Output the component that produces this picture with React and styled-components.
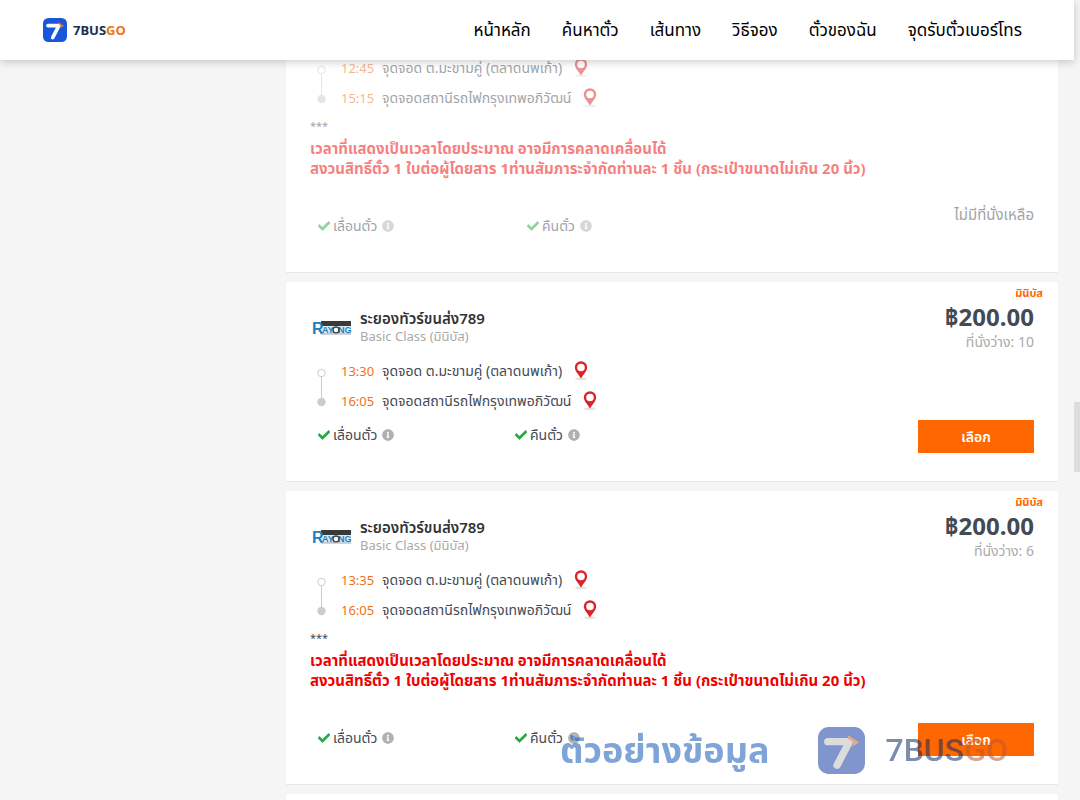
import React from 'react';
import styled, { createGlobalStyle } from 'styled-components';
import { FaCheck, FaInfoCircle } from 'react-icons/fa';

const GlobalStyle = createGlobalStyle`
  * {
    box-sizing: border-box;
  }

  body {
    background: #f5f5f5;
    color: #434a54;
    font-family: 'Noto Sans', 'Noto Sans Thai', Tahoma, sans-serif;
    font-size: 14px;
    line-height: 20px;
    margin: 0;
  }
`;

const Page = styled.div`
  height: 100vh;
  overflow: hidden;
  padding-right: 6px;
`;

const Header = styled.header`
  align-items: center;
  background: #fff;
  box-shadow: 0 2px 8px rgba(0, 0, 0, 0.2);
  display: flex;
  height: 60px;
  justify-content: space-between;
  padding: 0 52px 0 43px;
  position: relative;
  z-index: 2;
`;

const Brand = styled.a`
  align-items: center;
  color: #1b2d4f;
  display: flex;
  font-size: 13px;
  font-weight: bold;
  gap: 6px;
  text-decoration: none;
`;

const BrandAccent = styled.span`
  color: #ec7623;
`;

const Nav = styled.nav`
  display: flex;
  gap: 31px;
`;

const NavLink = styled.a`
  color: #000;
  font-size: 17px;
  line-height: 24px;
  text-decoration: none;
  white-space: nowrap;
`;

/* The list is scrolled: the first trip starts above the header. */
const Results = styled.main`
  display: flex;
  flex-direction: column;
  gap: 9px;
  margin: -81px 16px 0 286px;
`;

const Card = styled.article`
  background: #fff;
  border-bottom: 1px solid #e4e6e8;
  display: flex;
  flex-shrink: 0;
  justify-content: space-between;
  position: relative;
`;

const Details = styled.div`
  flex: 1;
  opacity: ${({ $faded }) => ($faded ? 0.5 : 1)};
  padding: 27px 0 36px 24px;
`;

const Aside = styled.div`
  align-items: flex-end;
  display: flex;
  flex-direction: column;
  justify-content: space-between;
  opacity: ${({ $faded }) => ($faded ? 0.5 : 1)};
  padding: 18px 24px 28px 0;
`;

const Operator = styled.div`
  align-items: center;
  display: flex;
  gap: 8px;
  height: 36px;
`;

const OperatorName = styled.h2`
  color: #333;
  font-size: 15px;
  font-weight: 600;
  line-height: 18px;
  margin: 0;
`;

const BusClass = styled.div`
  color: #aaa;
  font-size: 13px;
  line-height: 18px;
`;

const Route = styled.div`
  display: flex;
  margin-top: 11px;
`;

const Stops = styled.ul`
  list-style: none;
  margin: 0;
  padding: 0;
`;

const Stop = styled.li`
  align-items: center;
  display: flex;
  height: 30px;
`;

const Time = styled.time`
  color: #f0721a;
  font-size: 13px;
  width: 41px;
`;

const PinButton = styled.button`
  background: none;
  border: 0;
  cursor: pointer;
  display: flex;
  margin-left: 12px;
  padding: 0;
`;

const Notice = styled.div`
  margin: 3px 0 38px;
`;

const Stars = styled.div`
  font-size: 11px;
`;

const Warning = styled.p`
  color: #f00000;
  font-size: 15px;
  font-weight: bold;
  margin: 2px 0 0;
  white-space: nowrap;
`;

const Features = styled.ul`
  display: flex;
  list-style: none;
  margin: 9px 0 0;
  padding: 0 0 0 8px;
`;

const Feature = styled.li`
  align-items: center;
  display: flex;
  gap: 3px;
  width: ${({ $wide }) => ($wide ? '209px' : '197px')};

  svg:first-child {
    color: #28a745;
    stroke: #28a745;
    stroke-width: 20;
  }

  svg:last-child {
    color: #b0b0b0;
    margin-left: 2px;
  }
`;

const Badge = styled.span`
  color: #ff6700;
  font-size: 11px;
  font-weight: bold;
  line-height: 12px;
  position: absolute;
  right: 15px;
  top: 5px;
`;

const Price = styled.div`
  font-size: 24px;
  font-weight: bold;
  line-height: 33px;
  text-align: right;
`;

const Seats = styled.div`
  color: #aaa;
  line-height: 18px;
  text-align: right;
`;

const SelectButton = styled.button`
  background: #ff6700;
  border: 0;
  color: #fff;
  cursor: pointer;
  font: inherit;
  font-weight: 600;
  height: 33px;
  width: 116px;
`;

const SoldOut = styled.div`
  font-size: 15px;
  margin: auto 0 20px;
`;

const ScrollThumb = styled.div`
  background: #ddd;
  height: 70px;
  position: fixed;
  right: 0;
  top: 402px;
  width: 6px;
`;

const Watermark = styled.div`
  align-items: center;
  bottom: 22px;
  color: #0f2f68;
  display: flex;
  font-family: Roboto, sans-serif;
  font-size: 32px;
  font-weight: 500;
  line-height: 56px;
  opacity: 0.55;
  pointer-events: none;
  position: fixed;
  right: 72px;
  z-index: 3;
`;

const WatermarkText = styled.span`
  color: #1459b8;
  font-family: 'Noto Sans', 'Noto Sans Thai', sans-serif;
  font-size: 36px;
  font-weight: bold;
  margin-right: 49px;
`;

const WatermarkName = styled.span`
  margin-left: 20px;

  ${BrandAccent} {
    color: #c0582a;
  }
`;

function LogoMark({ size, fill = '#1a56db', digit = '#fff', arrow = '#f0721a' }) {
  return (
    <svg width={size} height={size} viewBox="0 0 48 48" aria-hidden="true">
      <rect width="48" height="48" rx="11" fill={fill} />
      <path
        d="M10 15h22L19.500 39"
        fill="none"
        stroke={digit}
        strokeWidth="7.500"
        strokeLinecap="round"
        strokeLinejoin="round"
      />
      <path d="M30 8l12 7.500-7 5c1.500-4 .5-7-4-8z" fill={arrow} />
    </svg>
  );
}

function RayongLogo() {
  return (
    <svg width="42" height="38" viewBox="0 0 42 38" role="img" aria-label="Rayong">
      <rect x="11" y="13" width="30" height="5" fill="#3a3a3a" />
      <rect x="11" y="18" width="30" height="8" fill="#dcebf3" />
      <g fontFamily="Liberation Sans, sans-serif" fontWeight="bold" fill="#1a80c2">
        <text x="2" y="26" fontSize="16">R</text>
        <text x="12" y="25" fontSize="9">AY</text>
        <text x="28" y="25" fontSize="9">NG</text>
      </g>
      <circle cx="26" cy="22" r="3" fill="#fff" stroke="#444" strokeWidth="1.500" />
      <path d="M11 26h30" stroke="#aaa" strokeWidth="1" />
    </svg>
  );
}

function RouteLine() {
  return (
    <svg width="31" height="60" viewBox="0 0 31 60" aria-hidden="true">
      <path d="M11.500 20v22" stroke="#ccc" strokeWidth="1" />
      <circle cx="11.500" cy="17" r="3.700" fill="#fff" stroke="#ccc" />
      <circle cx="11.500" cy="46" r="4.200" fill="#ccc" />
    </svg>
  );
}

function Pin() {
  return (
    <svg width="14" height="20" viewBox="0 0 14 20" aria-hidden="true">
      <ellipse cx="7" cy="17.700" rx="6" ry="1.500" fill="#e4e4e4" />
      <path
        fillRule="evenodd"
        fill="#d9252b"
        d="M7 .2a6.200 6.200 0 0 0-6.200 6.200c0 3.600 3.700 6.600 6.200 11.100 2.500-4.500 6.200-7.500 6.200-11.100A6.200 6.200 0 0 0 7 .2zm0 2.500a3.800 3.800 0 1 1 0 7.600 3.800 3.800 0 0 1 0-7.600z"
      />
    </svg>
  );
}

const links = ['หน้าหลัก', 'ค้นหาตั๋ว', 'เส้นทาง', 'วิธีจอง', 'ตั๋วของฉัน', 'จุดรับตั๋วเบอร์โทร'];

const trips = [
  { depart: '12:45', arrive: '15:15', seats: 0, notice: true },
  { depart: '13:30', arrive: '16:05', seats: 10, notice: false },
  { depart: '13:35', arrive: '16:05', seats: 6, notice: true },
];

function Trip({ depart, arrive, seats, notice }) {
  const soldOut = seats === 0;

  return (
    <Card>
      <Details $faded={soldOut}>
        <Operator>
          <RayongLogo />
          <div>
            <OperatorName>ระยองทัวร์ขนส่ง789</OperatorName>
            <BusClass>Basic Class (มินิบัส)</BusClass>
          </div>
        </Operator>
        <Route>
          <RouteLine />
          <Stops>
            <Stop>
              <Time>{depart}</Time>
              จุดจอด ต.มะขามคู่ (ตลาดนพเก้า)
              <PinButton aria-label="แผนที่">
                <Pin />
              </PinButton>
            </Stop>
            <Stop>
              <Time>{arrive}</Time>
              จุดจอดสถานีรถไฟกรุงเทพอภิวัฒน์
              <PinButton aria-label="แผนที่">
                <Pin />
              </PinButton>
            </Stop>
          </Stops>
        </Route>
        {notice && (
          <Notice>
            <Stars>***</Stars>
            <Warning>
              เวลาที่แสดงเป็นเวลาโดยประมาณ อาจมีการคลาดเคลื่อนได้
              <br />
              สงวนสิทธิ์ตั๋ว 1 ใบต่อผู้โดยสาร 1ท่านสัมภาระจำกัดท่านละ 1 ชิ้น (กระเป๋าขนาดไม่เกิน 20 นิ้ว)
            </Warning>
          </Notice>
        )}
        <Features>
          {['เลื่อนตั๋ว', 'คืนตั๋ว'].map(name => (
            <Feature key={name} $wide={soldOut}>
              <FaCheck size={12} />
              {name}
              <FaInfoCircle size={12} />
            </Feature>
          ))}
        </Features>
      </Details>
      {!soldOut && <Badge>มินิบัส</Badge>}
      <Aside $faded={soldOut}>
        {soldOut ? (
          <SoldOut>ไม่มีที่นั่งเหลือ</SoldOut>
        ) : (
          <>
            <div>
              <Price>฿200.00</Price>
              <Seats>ที่นั่งว่าง: {seats}</Seats>
            </div>
            <SelectButton>เลือก</SelectButton>
          </>
        )}
      </Aside>
    </Card>
  );
}

const NextCard = styled(Card)`
  height: 200px;
`;

export default function App() {
  return (
    <Page>
      <GlobalStyle />
      <Header>
        <Brand href="#">
          <LogoMark size={24} />
          <span>
            7BUS<BrandAccent>GO</BrandAccent>
          </span>
        </Brand>
        <Nav>
          {links.map(link => (
            <NavLink key={link} href="#">
              {link}
            </NavLink>
          ))}
        </Nav>
      </Header>
      <Results>
        {trips.map(trip => (
          <Trip key={trip.depart} {...trip} />
        ))}
        <NextCard />
      </Results>
      <ScrollThumb />
      <Watermark aria-hidden="true">
        <WatermarkText>ตัวอย่างข้อมูล</WatermarkText>
        <LogoMark size={47} fill="#183ca7" digit="#bfbfbf" arrow="#c86828" />
        <WatermarkName>
          7BUS<BrandAccent>GO</BrandAccent>
        </WatermarkName>
      </Watermark>
    </Page>
  );
}
